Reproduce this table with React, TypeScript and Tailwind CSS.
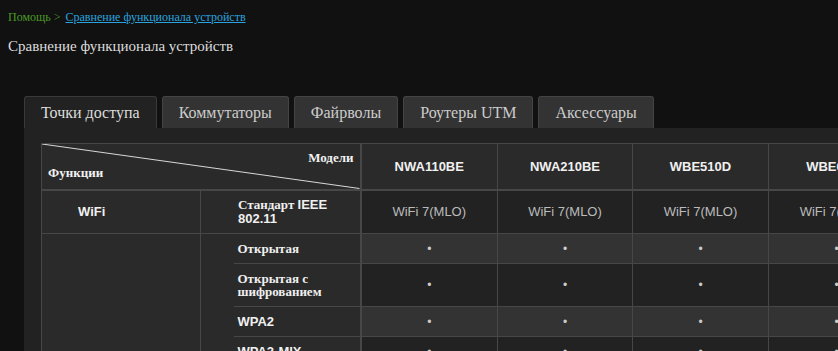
import React from "react";

const serif = "font-['Liberation_Serif','Times_New_Roman',serif]";
const sans = "font-['Liberation_Sans',Arial,sans-serif]";
const serifBold = `${serif} font-bold`;

const models = ["NWA110BE", "NWA210BE", "WBE510D", "WBE660S", "WBE530"];

const tabs = ["Точки доступа", "Коммутаторы", "Файрволы", "Роутеры UTM", "Аксессуары"];

interface SecurityRow {
	label: React.ReactNode;
	height: string;
}

const securityRows: SecurityRow[] = [
	{ label: <span className={serifBold}>Открытая</span>, height: "h-[30px]" },
	{
		label: (
			<span className={`${serifBold} block leading-[13px]`}>
				Открытая с
				<br />
				шифрованием
			</span>
		),
		height: "h-[43px]",
	},
	{ label: <span className={`${sans} font-bold`}>WPA2</span>, height: "h-[30px]" },
	{ label: <span className={`${sans} font-bold`}>WPA2-MIX</span>, height: "h-[30px]" },
];

const App = () => {
	return (
		<div className={`w-[838px] h-[351px] overflow-hidden bg-[#111111] ${serif}`}>
			{/* breadcrumbs */}
			<div className="pl-[8px] pt-[9px] text-[12px] leading-[16px]">
				<span className="text-[#4b9a26]">Помощь &gt;</span>
				<a href="#" className="ml-[5px] text-[#2aa3df] underline">
					Сравнение функционала устройств
				</a>
			</div>

			<h1 className="pl-[8px] pt-[12px] text-[15px] leading-[18px] text-[#dddddd]">
				Сравнение функционала устройств
			</h1>

			<div className="ml-[24px] mt-[41px]">
				{/* tabs */}
				<div className="flex gap-[5px]">
					{tabs.map((tab, i) => (
						<div
							key={tab}
							className={`h-[32px] pl-[16px] pr-[16px] flex items-center rounded-t-[3px] border border-b-0 text-[16px] ${
								i === 0
									? "bg-[#222222] border-[#3a3a3a] text-[#dddddd]"
									: "bg-[#333333] border-[#444444] text-[#cccccc]"
							}`}
						>
							{tab}
						</div>
					))}
				</div>

				{/* panel */}
				<div className="bg-[#222222] pl-[17px] pt-[15px] w-[1000px]">
					<table className="table-fixed border-collapse w-[1010px]">
						<colgroup>
							<col className="w-[159px]" />
							<col className="w-[33px]" />
							<col className="w-[127px]" />
							<col className="w-[137px]" />
							<col className="w-[135px]" />
							<col className="w-[136px]" />
							<col className="w-[136px]" />
							<col className="w-[147px]" />
						</colgroup>
						<thead>
							<tr className="h-[46px]">
								<th
									colSpan={3}
									className="relative p-0 bg-[#2a2a2a] border border-[#474747] border-b-2 border-r-2"
								>
									<svg
										className="absolute inset-0 w-full h-full"
										preserveAspectRatio="none"
										viewBox="0 0 100 100"
									>
										<line
											x1="0"
											y1="0"
											x2="100"
											y2="100"
											stroke="#d8d8d8"
											strokeWidth="1"
											vectorEffect="non-scaling-stroke"
										/>
									</svg>
									<div className={`relative h-[44px] text-[13px] text-[#f2f2f2] ${serifBold}`}>
										<span className="absolute right-[6px] top-[6px] leading-[16px]">Модели</span>
										<span className="absolute left-[6px] top-[21px] leading-[16px]">Функции</span>
									</div>
								</th>
								{models.map((m) => (
									<th
										key={m}
										className={`${sans} bg-[#2a2a2a] border border-[#474747] border-b-2 text-[13px] font-bold text-[#f0f0f0] text-center`}
									>
										{m}
									</th>
								))}
							</tr>
						</thead>
						<tbody>
							<tr className="h-[44px]">
								<td
									className={`${sans} bg-[#2a2a2a] border border-[#474747] pl-[36px] text-[13px] font-bold text-[#f0f0f0]`}
								>
									WiFi
								</td>
								<td
									colSpan={2}
									className="bg-[#2a2a2a] border border-[#474747] border-r-2 pl-[37px] text-[13px] text-[#f0f0f0] leading-[14px]"
								>
									<span className={serifBold}>Стандарт </span>
									<span className={`${sans} font-bold`}>IEEE 802.11</span>
								</td>
								{models.map((m) => (
									<td
										key={m}
										className={`${sans} bg-[#222222] border border-[#474747] text-center text-[13px] text-[#bbbbbb]`}
									>
										WiFi 7(MLO)
									</td>
								))}
							</tr>
							{securityRows.map((row, i) => (
								<tr key={i} className={row.height}>
									{i === 0 && (
										<>
											<td
												rowSpan={securityRows.length}
												className="bg-[#2a2a2a] border border-[#474747]"
											/>
											<td
												rowSpan={securityRows.length}
												className="bg-[#2a2a2a] border-l border-[#474747]"
											/>
										</>
									)}
									<td className="bg-[#2a2a2a] border-y border-r-2 border-[#474747] pl-[4px] text-[13px] text-[#f0f0f0]">
										{row.label}
									</td>
									{models.map((m) => (
										<td
											key={m}
											className={`${sans} border border-[#474747] text-center text-[12px] text-[#cccccc] ${
												i % 2 === 0 ? "bg-[#333333]" : "bg-[#222222]"
											}`}
										>
											•
										</td>
									))}
								</tr>
							))}
						</tbody>
					</table>
				</div>
			</div>
		</div>
	);
};

export default App;
